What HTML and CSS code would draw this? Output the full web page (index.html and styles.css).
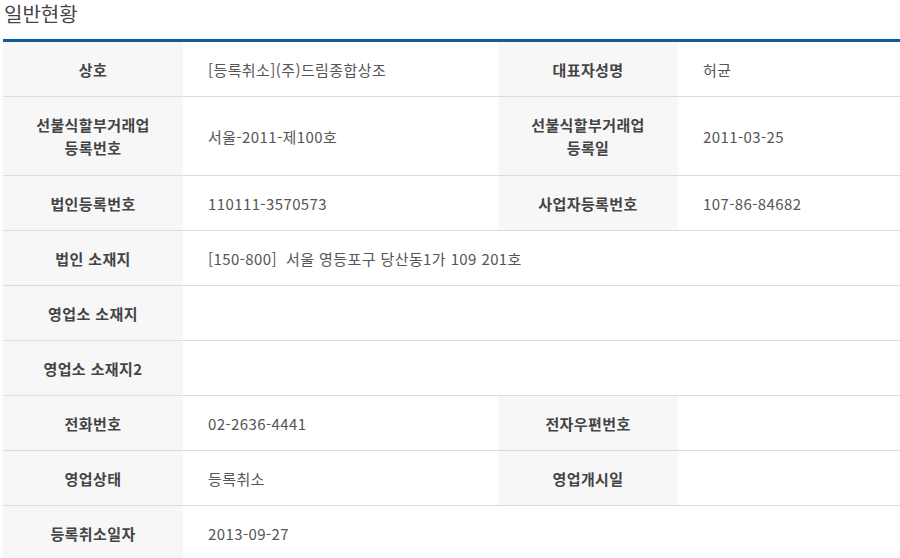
FILE: index.html
```html
<!DOCTYPE html>
<html lang="ko">
<head>
    <meta charset="UTF-8">
    <title>일반현황</title>
    <link rel="stylesheet" href="styles.css">
</head>
<body>
<div class="section">
    <h3 class="section-title">일반현황</h3>
    <table class="info-table">
        <colgroup>
            <col class="col-label">
            <col class="col-value">
            <col class="col-label">
            <col>
        </colgroup>
        <tr>
            <th>상호</th>
            <td>[등록취소](주)드림종합상조</td>
            <th>대표자성명</th>
            <td>허균</td>
        </tr>
        <tr class="tall">
            <th>선불식할부거래업<br>등록번호</th>
            <td>서울-2011-제100호</td>
            <th>선불식할부거래업<br>등록일</th>
            <td>2011-03-25</td>
        </tr>
        <tr>
            <th>법인등록번호</th>
            <td>110111-3570573</td>
            <th>사업자등록번호</th>
            <td>107-86-84682</td>
        </tr>
        <tr>
            <th>법인 소재지</th>
            <td colspan="3">[150-800]&nbsp;&nbsp;서울 영등포구 당산동1가 109 201호</td>
        </tr>
        <tr>
            <th>영업소 소재지</th>
            <td colspan="3"></td>
        </tr>
        <tr>
            <th>영업소 소재지2</th>
            <td colspan="3"></td>
        </tr>
        <tr>
            <th>전화번호</th>
            <td>02-2636-4441</td>
            <th>전자우편번호</th>
            <td></td>
        </tr>
        <tr>
            <th>영업상태</th>
            <td>등록취소</td>
            <th>영업개시일</th>
            <td></td>
        </tr>
        <tr>
            <th>등록취소일자</th>
            <td>2013-09-27</td>
            <td></td>
            <td></td>
        </tr>
    </table>
</div>
</body>
</html>
```

FILE: styles.css
```css
body {
    margin: 0;
    padding: 0;
    background-color: #fff;
    font-family: "Noto Sans CJK KR", "Noto Sans", sans-serif;
    color: #555;
}

.section {
    padding-left: 3px;
}

.section-title {
    margin: 0;
    padding: 1px 0 0 1px;
    height: 38px;
    font-size: 20px;
    font-weight: normal;
    line-height: 26px;
    color: #444;
}

.info-table {
    width: 897px;
    border-collapse: collapse;
    border-top: 3px solid #135c9c;
    table-layout: fixed;
    font-size: 15px;
    letter-spacing: 0.4px;
}

.col-label {
    width: 180px;
}

.col-value {
    width: 315px;
}

.info-table th,
.info-table td {
    height: 54px;
    padding: 0;
    border-bottom: 1px solid #dcdcdc;
    vertical-align: middle;
    line-height: 23px;
}

.info-table tr.tall th,
.info-table tr.tall td {
    height: 78px;
}

.info-table th {
    background-color: #f7f7f7;
    color: #444;
    font-weight: bold;
    text-align: center;
}

.info-table td {
    padding-left: 25px;
    text-align: left;
}
```
